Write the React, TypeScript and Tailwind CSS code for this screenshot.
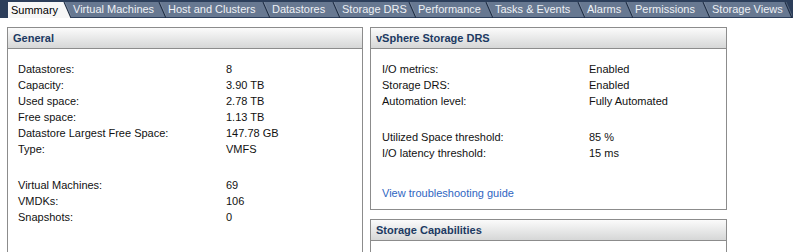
import React from "react";

const NAVY = "#2c3e5a";
const TAB = "#677891";
const SEL = "#f7f7f7";

type Tab = { label: string; w: number };
const tabs: Tab[] = [
  { label: "Summary", w: 63 },
  { label: "Virtual Machines", w: 95 },
  { label: "Host and Clusters", w: 104 },
  { label: "Datastores", w: 70 },
  { label: "Storage DRS", w: 76 },
  { label: "Performance", w: 77 },
  { label: "Tasks & Events", w: 92 },
  { label: "Alarms", w: 48 },
  { label: "Permissions", w: 77 },
  { label: "Storage Views", w: 82 },
];

function Diag({ own, next, ownSel }: { own: string; next: string; ownSel: boolean }) {
  return (
    <svg width="8" height="16" viewBox="0 0 8 16" className="block shrink-0">
      <rect x="0" y="0" width="8" height="16" fill={next} />
      {next !== NAVY && <rect x="0" y="15" width="8" height="1" fill={NAVY} />}
      <polygon points="0,0 1,0 8,16 0,16" fill={own} />
      {!ownSel && <rect x="0" y="15" width="8" height="1" fill={NAVY} />}
      <line x1="1" y1="0" x2="8" y2="16" stroke="#1e2c42" strokeWidth="1.1" />
      <line x1="2" y1="0" x2="9" y2="16" stroke="#9aa8bb" strokeWidth="0.6" opacity="0.6" />
    </svg>
  );
}

function TabBar() {
  return (
    <div className="h-[18px] bg-[#2c3e5a] flex items-start pt-[2px] pl-[8px]">
      {tabs.map((t, i) => {
        const sel = i === 0;
        const own = sel ? SEL : TAB;
        const next = i === tabs.length - 1 ? NAVY : TAB;
        return (
          <div key={t.label} className="flex h-[16px] shrink-0" style={{ width: t.w }}>
            <div
              className={
                sel
                  ? "flex-1 bg-[#f7f7f7] text-black pl-[3px] leading-[16px] whitespace-nowrap overflow-hidden"
                  : "flex-1 bg-[#677891] text-[#eef1f5] pl-[2px] leading-[15px] border-b border-[#2c3e5a] whitespace-nowrap overflow-hidden"
              }
            >
              {t.label}
            </div>
            <Diag own={own} next={next} ownSel={sel} />
          </div>
        );
      })}
    </div>
  );
}

function Panel({
  title,
  className,
  children,
}: {
  title: string;
  className: string;
  children?: React.ReactNode;
}) {
  return (
    <div className={"border border-[#8c8c8c] bg-white " + className}>
      <div className="h-[21px] border-b border-[#8c8c8c] bg-gradient-to-b from-[#fbfbfb] to-[#d6d7d7] pl-[5px] leading-[20px] font-bold text-[#1c3a62]">
        {title}
      </div>
      {children}
    </div>
  );
}

function Row({ label, value, col }: { label: string; value: string; col: string }) {
  return (
    <div className="flex h-[16px] leading-[16px]">
      <div className={col}>{label}</div>
      <div>{value}</div>
    </div>
  );
}

export default function App() {
  return (
    <div className="w-[793px] h-[252px] overflow-hidden bg-white text-[11px] text-[#111] font-['Liberation_Sans',Arial,sans-serif]">
      <TabBar />
      <div className="flex gap-[7px] pl-[7px] pt-[9px]">
        <Panel title="General" className="w-[356px] h-[260px] shrink-0">
          <div className="pl-[10px] pt-[12px]">
            <Row col="w-[208px]" label="Datastores:" value="8" />
            <Row col="w-[208px]" label="Capacity:" value="3.90 TB" />
            <Row col="w-[208px]" label="Used space:" value="2.78 TB" />
            <Row col="w-[208px]" label="Free space:" value="1.13 TB" />
            <Row col="w-[208px]" label="Datastore Largest Free Space:" value="147.78 GB" />
            <Row col="w-[208px]" label="Type:" value="VMFS" />
            <div className="mt-[20px]">
              <Row col="w-[208px]" label="Virtual Machines:" value="69" />
              <Row col="w-[208px]" label="VMDKs:" value="106" />
              <Row col="w-[208px]" label="Snapshots:" value="0" />
            </div>
          </div>
        </Panel>
        <div className="flex flex-col gap-[9px] w-[357px] shrink-0">
          <Panel title="vSphere Storage DRS" className="w-[357px]">
            <div className="pl-[11px] pt-[12px] pb-[8px]">
              <Row col="w-[207px]" label="I/O metrics:" value="Enabled" />
              <Row col="w-[207px]" label="Storage DRS:" value="Enabled" />
              <Row col="w-[207px]" label="Automation level:" value="Fully Automated" />
              <div className="mt-[20px]">
                <Row col="w-[207px]" label="Utilized Space threshold:" value="85 %" />
                <Row col="w-[207px]" label="I/O latency threshold:" value="15 ms" />
              </div>
              <div className="mt-[24px] h-[16px] leading-[16px] text-[#2f66c2]">
                View troubleshooting guide
              </div>
            </div>
          </Panel>
          <Panel title="Storage Capabilities" className="w-[357px] h-[60px]" />
        </div>
      </div>
    </div>
  );
}
